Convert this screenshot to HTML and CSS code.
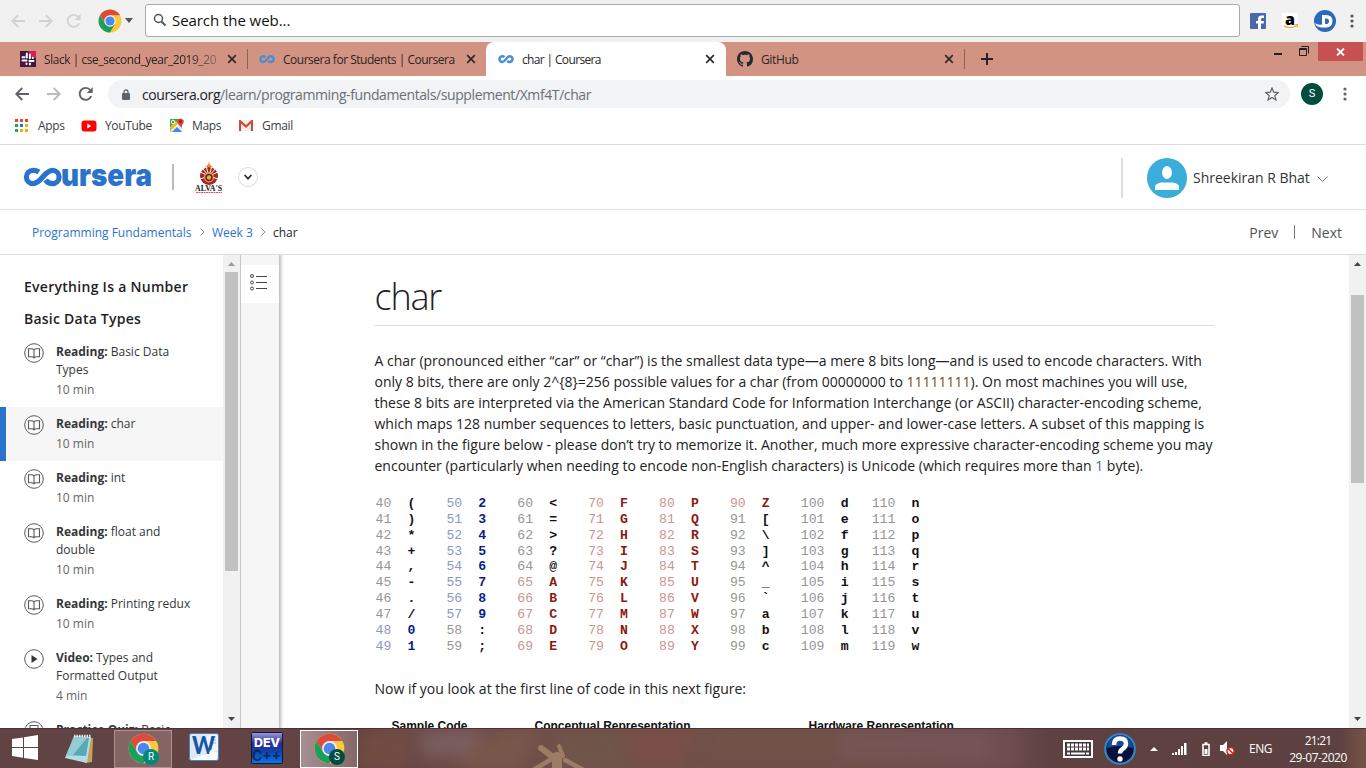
FILE: index.html
```
<!DOCTYPE html>
<html lang="en">
<head>
<meta charset="utf-8">
<title>char | Coursera</title>
<link rel="stylesheet" href="styles.css">
</head>
<body>
<svg width="0" height="0" class="defs">
  <defs>
    <symbol id="chrome" viewBox="0 0 48 48">
      <circle cx="24" cy="24" r="23" fill="#fbc93c"/>
      <path d="M24 12.500h19.900A23 23 0 0 0 4.100 12.500L14 29.500z" fill="#dc4b3e"/>
      <path d="M4.100 12.500A23 23 0 0 0 24 47l10-17.200L24 24 14 29.700z" fill="#1a9f5c"/>
      <circle cx="24" cy="24" r="11.500" fill="#f1f1f1"/>
      <circle cx="24" cy="24" r="9" fill="#4a87ef"/>
    </symbol>
    <symbol id="infinity" viewBox="0 0 16 10">
      <path d="M6.600 3Q5.500 2.200 4.300 2.200a2.900 2.900 0 0 0 0 5.800c3.400 0 4-5.800 7.400-5.800a2.900 2.900 0 0 1 0 5.800Q10.200 8 9.200 7" fill="none" stroke="#4a8fd0" stroke-width="2.500"/>
    </symbol>
    <symbol id="close" viewBox="0 0 10 10"><path d="M1.200 1.200l7.600 7.600M8.800 1.200L1.200 8.800" stroke="#2a2a2e" stroke-width="1.700"/></symbol>
    <symbol id="back" viewBox="0 0 14 14"><path d="M14 7H1.500M7.300 1L1.300 7l6 6" fill="none" stroke="currentColor" stroke-width="1.900"/></symbol>
    <symbol id="reload" viewBox="0 0 16 16"><path d="M13.200 10.200A6 6 0 1 1 12.300 4" fill="none" stroke="currentColor" stroke-width="1.900"/><path d="M14.700 1v6h-6z" fill="currentColor"/></symbol>
    <symbol id="book" viewBox="0 0 20 20"><circle cx="10" cy="10" r="9.300" fill="#fff" fill-opacity=".5" stroke="#55585b"/><path d="M10 7q-1-1.200-2.500-1.200h-3v8h3Q9 13.800 10 14.800q1-1 2.500-1h3v-8h-3Q11 5.800 10 7zv7.500" fill="none" stroke="#55585b" stroke-width="1.100"/></symbol>
    <symbol id="dots" viewBox="0 0 4 14"><circle cx="2" cy="2" r="1.600"/><circle cx="2" cy="7" r="1.600"/><circle cx="2" cy="12" r="1.600"/></symbol>
  </defs>
</svg>

<div class="search-strip">
  <svg class="nav faded" width="14" height="14"><use href="#back"/></svg>
  <svg class="nav faded flip" width="14" height="14"><use href="#back"/></svg>
  <svg class="nav faded" width="16" height="16"><use href="#reload"/></svg>
  <svg class="launcher" width="24" height="24"><use href="#chrome"/></svg>
  <svg class="caret" width="8" height="5"><path d="M0 0h8L4 5z" fill="#555"/></svg>
  <div class="web-search">
    <svg width="14" height="14"><circle cx="5.500" cy="5.500" r="4" fill="none" stroke="#555" stroke-width="1.500"/><path d="M8.500 8.500l4 4" stroke="#555" stroke-width="1.900"/></svg>
    <span>Search the web...</span>
  </div>
  <svg class="fb" width="16" height="16"><rect width="16" height="16" rx="1" fill="#4a69a8"/><path d="M8 16v-5.500H6V8h2V6q0-3.500 3.500-3.500H14V5h-1.700q-1.300 0-1.300 1.300V8h3l-.4 2.500H11V16z" fill="#fff"/></svg>
  <svg class="amazon" width="16" height="16"><rect width="16" height="16" fill="#fff"/><text x="3" y="12" class="amazon-a">a</text><path d="M1.500 12.700q6 3.500 12.500.5M12.500 12l3-.500-.7 3" fill="none" stroke="#f4a11a" stroke-width="1.200"/></svg>
  <svg class="disk" width="22" height="22"><circle cx="11" cy="11" r="11" fill="#2d68bd"/><path d="M.5 13q3.500 2.500 7.500 1.500V5h4q6.500 0 6.500 6T12 17.500H7.500Q2.500 17 .5 13zM11 8.500v5.500h1q3 0 3-2.800t-3-2.700z" fill="#fff" fill-rule="evenodd"/></svg>
  <svg class="menu" width="4" height="14" fill="#555"><use href="#dots"/></svg>
</div>

<div class="tabs">
  <div class="tab slack">
    <svg width="16" height="16"><rect width="16" height="16" fill="#3f1645"/><path d="M8 0h8v7H12z" fill="#d4214e"/><g stroke="#fff" stroke-width="2" stroke-linecap="round"><path d="M6.800 2.500v4M2.500 6.200h2M9.900 3.500v3.800M12.800 6.800v.1M2.500 9.500h4M9.500 9.900h4M6.500 12.500v.5M9.900 12.500v1"/></g></svg>
    <span class="title fade">Slack | cse_second_year_2019_20</span>
    <svg class="x" width="10" height="10"><use href="#close"/></svg>
  </div>
  <i class="tab-sep"></i>
  <div class="tab students">
    <svg width="16" height="10"><use href="#infinity"/></svg>
    <span class="title">Coursera for Students | Coursera</span>
    <svg class="x" width="10" height="10"><use href="#close"/></svg>
  </div>
  <div class="tab active">
    <svg width="16" height="10"><use href="#infinity"/></svg>
    <span class="title">char | Coursera</span>
    <svg class="x" width="10" height="10"><use href="#close"/></svg>
  </div>
  <div class="tab github">
    <svg width="16" height="16" viewBox="0 0 16 16"><path fill="#24292e" d="M8 0C3.580 0 0 3.580 0 8c0 3.540 2.290 6.530 5.470 7.590.4.070.55-.17.55-.38 0-.19-.01-.82-.01-1.490-2.010.37-2.530-.49-2.690-.94-.09-.23-.48-.94-.82-1.130-.28-.15-.68-.52-.01-.53.63-.01 1.080.58 1.230.82.720 1.210 1.870.87 2.330.66.070-.52.28-.87.510-1.070-1.780-.2-3.640-.89-3.640-3.950 0-.87.310-1.590.82-2.150-.08-.2-.36-1.020.08-2.120 0 0 .67-.21 2.200.82.640-.18 1.320-.27 2-.27s1.360.09 2 .27c1.530-1.040 2.200-.82 2.200-.82.440 1.100.160 1.920.080 2.120.510.560.820 1.270.820 2.150 0 3.070-1.870 3.750-3.650 3.950.290.250.540.730.540 1.480 0 1.070-.01 1.930-.01 2.200 0 .210.150.460.550.380A8.010 8.010 0 0 0 16 8c0-4.420-3.580-8-8-8z"/></svg>
    <span class="title">GitHub</span>
    <svg class="x" width="10" height="10"><use href="#close"/></svg>
  </div>
  <i class="tab-sep"></i>
  <svg class="plus" width="12" height="12"><path d="M6 0v12M0 6h12" stroke="#24242a" stroke-width="2"/></svg>
  <div class="win-buttons">
    <svg width="8" height="2"><rect width="8" height="2" fill="#222"/></svg>
    <svg width="10" height="10"><path d="M.5 2.500h7v7h-7zM2.500.5h7v7M0 3.500h8" fill="none" stroke="#222"/></svg>
    <div class="win-close"><svg width="9" height="8"><path d="M1 .5l7 7M8 .5l-7 7" stroke="#fff" stroke-width="1.800"/></svg></div>
  </div>
</div>

<div class="toolbar">
  <svg class="nav" width="14" height="14"><use href="#back"/></svg>
  <svg class="nav flip light" width="14" height="14"><use href="#back"/></svg>
  <svg class="nav" width="16" height="16"><use href="#reload"/></svg>
  <div class="omnibox">
    <svg class="lock" width="8" height="11"><path d="M2 4.500V3a2 2 0 0 1 4 0v1.500" fill="none" stroke="#5f6368" stroke-width="1.300"/><rect y="4" width="8" height="7" rx="1" fill="#5f6368"/></svg>
    <span class="url"><b>coursera.org</b>/learn/programming-fundamentals/supplement/Xmf4T/char</span>
    <svg class="star" width="14" height="14" viewBox="0 0 14 14"><path d="M7 1l1.700 4.200 4.500.4-3.400 2.900 1.100 4.400L7 10.500l-3.900 2.400 1.100-4.400L.8 5.600l4.500-.4z" fill="none" stroke="#5f6368" stroke-width="1.200"/></svg>
  </div>
  <div class="profile">S</div>
  <svg width="4" height="14" fill="#5f6368"><use href="#dots"/></svg>
</div>

<div class="bookmarks">
  <svg class="apps" width="13" height="13"><path d="M0 0h3v3H0zM5 0h3v3H5zM10 0h3v3h-3z" fill="#e8432e"/><path d="M0 5h3v3H0zM0 10h3v3H0z" fill="#2da44e"/><path d="M5 5h3v3H5z" fill="#1a73e8"/><path d="M10 5h3v3h-3zM5 10h3v3H5zM10 10h3v3h-3z" fill="#f4af00"/></svg>
  <span class="bm-apps">Apps</span>
  <svg class="bm-icon" width="16" height="12"><rect x=".5" y=".5" width="15" height="11" rx="3" fill="#f00"/><path d="M6.300 3.500v5l4-2.500z" fill="#fff"/></svg>
  <span class="bm-yt">YouTube</span>
  <svg class="bm-icon" width="15" height="15"><path d="M1 1h12v13H1z" fill="#34a853"/><path d="M1 13L10 4l4 9-1 1H2z" fill="#e8eaed"/><path d="M3 14l5-5 5 5z" fill="#4285f4"/><path d="M1 9l6-6 2 2-8 8z" fill="#fbbc04"/><circle cx="4" cy="4" r="1.800" fill="none" stroke="#fff"/><path d="M11.500 9Q7.500 4.500 8.500 2.200q3-3.500 6 0Q15.500 4.500 11.500 9z" fill="#e53935"/><circle cx="11.500" cy="3.500" r="1.200" fill="#7c1d1d"/></svg>
  <span class="bm-maps">Maps</span>
  <svg class="bm-icon" width="14" height="11"><path d="M0 0h14v11H0z" fill="#eee"/><path d="M1 11V1l6 5.500L13 1v10" fill="none" stroke="#d54538" stroke-width="2.200"/></svg>
  <span class="bm-gmail">Gmail</span>
</div>

<header class="site-header">
  <svg class="logo" width="128" height="20"><path d="M15 5Q12.500 3.400 9 3.400a6.600 6.600 0 0 0 0 13.200C17.500 16.600 20 3.400 28.500 3.400a6.600 6.600 0 0 1 0 13.200Q24 16.600 21.500 13" fill="none" stroke="#2a73cc" stroke-width="5.200"/><text x="37" y="19" textLength="91" lengthAdjust="spacingAndGlyphs" class="logo-text">ursera</text></svg>
  <i class="logo-sep"></i>
  <svg class="alvas" width="28" height="34"><circle cx="14" cy="16" r="9" fill="#a52525"/><path d="M14 16L5 12M14 16L7 8M14 16L11 6M14 16l3-10M14 16l7-8M14 16l9-4M14 16l-9 3M14 16l9 3" stroke="#fff"/><circle cx="14" cy="17.500" r="5" fill="#eaaa46"/><circle cx="14" cy="17.500" r="3" fill="none" stroke="#60201d" stroke-width="1.500"/><path d="M10 7q4-2 4-6.500Q14 5 18 7z" fill="#ef8d28"/><path d="M5 22q9 7 18 0l-2 3H7z" fill="#fff"/><text x="0" y="30.500" textLength="27" lengthAdjust="spacingAndGlyphs" class="alvas-text">ALVA'S</text><path d="M1 32.500h26" stroke="#ea5252" stroke-dasharray="2 .5"/></svg>
  <svg class="round-caret" width="20" height="20"><circle cx="10" cy="10" r="9.500" fill="#fff" stroke="#ddd"/><path d="M6.500 8l3.500 3.700L13.500 8" fill="none" stroke="#2c3035" stroke-width="1.800"/></svg>
  <i class="user-sep"></i>
  <svg class="avatar" width="40" height="40"><circle cx="20" cy="20" r="20" fill="#3badda"/><ellipse cx="20" cy="14.500" rx="5" ry="6.500" fill="#fff"/><path d="M8 32v-3q0-3.500 6-4.500h12q6 1 6 4.500v3z" fill="#fff"/></svg>
  <span class="user">Shreekiran R Bhat</span>
  <svg class="user-caret" width="11" height="6"><path d="M.5.5l5 5 5-5" fill="none" stroke="#777"/></svg>
</header>

<nav class="crumbs">
  <a class="crumb-course">Programming Fundamentals</a>
  <svg width="5" height="8"><path d="M.5.5L4 4 .5 7.500" fill="none" stroke="#999"/></svg>
  <a class="crumb-week">Week 3</a>
  <svg width="5" height="8"><path d="M.5.5L4 4 .5 7.500" fill="none" stroke="#999"/></svg>
  <span class="crumb-now">char</span>
  <span class="prev">Prev</span><i class="pager-sep"></i><span class="next">Next</span>
</nav>

<div class="content">
  <aside class="lessons">
    <h3 class="wide">Everything Is a Number</h3>
    <h3>Basic Data Types</h3>
    <div class="lesson"><svg width="20" height="20"><use href="#book"/></svg><div><p><b>Reading:</b> Basic Data<br>Types</p><small>10 min</small></div></div>
    <div class="lesson current"><svg width="20" height="20"><use href="#book"/></svg><div><p><b>Reading:</b> char</p><small>10 min</small></div></div>
    <div class="lesson"><svg width="20" height="20"><use href="#book"/></svg><div><p><b>Reading:</b> int</p><small>10 min</small></div></div>
    <div class="lesson"><svg width="20" height="20"><use href="#book"/></svg><div><p><b>Reading:</b> float and<br>double</p><small>10 min</small></div></div>
    <div class="lesson"><svg width="20" height="20"><use href="#book"/></svg><div><p><b>Reading:</b> Printing redux</p><small>10 min</small></div></div>
    <div class="lesson"><svg width="20" height="20"><circle cx="10" cy="10" r="9.300" fill="#fff" stroke="#55585b"/><path d="M7.500 6v8l6-4z" fill="#333639"/></svg><div><p><b>Video:</b> Types and<br>Formatted Output</p><small>4 min</small></div></div>
    <div class="lesson"><svg width="20" height="20"><circle cx="10" cy="10" r="9.300" fill="#fff" stroke="#55585b"/><rect x="6" y="4.500" width="8" height="11" fill="none" stroke="#55585b"/></svg><div><p><b>Practice Quiz:</b> Basic</p></div></div>
  </aside>
  <div class="scroll side-scroll">
    <svg width="7" height="4"><path d="M0 4h7L3.500 0z" fill="#999"/></svg>
    <i class="thumb"></i>
    <svg class="down" width="7" height="4"><path d="M0 0h7L3.500 4z" fill="#444"/></svg>
  </div>
  <div class="rail">
    <div class="rail-button"><svg width="17" height="17"><g fill="none" stroke="#444"><circle cx="2" cy="2" r="1.500"/><circle cx="2" cy="8.500" r="1.500"/><circle cx="2" cy="14.500" r="1.500"/></g><path d="M6 2.500h11M6 8.500h11M6 14.500h11" stroke="#444"/></svg></div>
  </div>
  <main>
    <h1>char</h1>
    <p class="body-text"><span>A char (pronounced either “car” or “char”) is the smallest data type—a mere 8 bits long—and is used to encode characters. With</span><span>only 8 bits, there are only 2^{8}=256 possible values for a char (from 00000000 to <em>11111111</em>). On most machines you will use,</span><span>these 8 bits are interpreted via the American Standard Code for Information Interchange (or ASCII) character-encoding scheme,</span><span>which maps 128 number sequences to letters, basic punctuation, and upper- and lower-case letters. A subset of this mapping is</span><span>shown in the figure below - please don’t try to memorize it. Another, much more expressive character-encoding scheme you may</span><span>encounter (particularly when needing to encode non-English characters) is Unicode (which requires more than <u>1</u> byte).</span></p>
    <div class="ascii" id="ascii"></div>
    <p class="body-text follow">Now if you look at the first line of code in this next figure:</p>
    <div class="figure-heads"><b>Sample Code</b><b>Conceptual Representation</b><b>Hardware Representation</b></div>
  </main>
  <div class="scroll main-scroll">
    <svg width="7" height="4"><path d="M0 4h7L3.500 0z" fill="#444"/></svg>
    <i class="thumb"></i>
    <svg class="down" width="7" height="4"><path d="M0 0h7L3.500 4z" fill="#444"/></svg>
  </div>
</div>

<footer class="taskbar">
  <svg class="wallpaper" width="1366" height="40" preserveAspectRatio="none">
    <defs><filter id="soft"><feGaussianBlur stdDeviation="7"/></filter><filter id="slight"><feGaussianBlur stdDeviation=".7"/></filter></defs>
    <g filter="url(#soft)" opacity=".65">
      <path d="M365 0h50l-10 40h-50z" fill="#795144"/><path d="M420 0h60v28h-60z" fill="#806668"/>
      <path d="M455 40q20-25 55-40h30l-20 40z" fill="#7f5a4b"/><path d="M560 0h60l10 40h-80z" fill="#70594b"/>
      <path d="M620 0h80l-25 40h-35z" fill="#804f48"/><path d="M710 0h130v22H710z" fill="#715549"/>
      <path d="M840 0h150v32H840z" fill="#79595a"/><path d="M990 0h30v40h-30z" fill="#745052"/>
    </g>
    <g filter="url(#slight)" stroke="#a5846c" fill="none" stroke-linecap="round" opacity=".85"><path d="M541 19l12 9" stroke-width="6"/><path d="M559 17l4 10" stroke-width="4"/><path d="M557 28v14" stroke-width="10"/><path d="M550 31l-20 12M565 31l24 13" stroke-width="4.500"/></g>
  </svg>
  <svg class="start" width="26" height="25"><path d="M0 4l11-1.600V12H0zM12 2.200L26 0v12H12zM0 13h11v9.800L0 21zM12 13h14v12l-14-2.100z" fill="#fff"/></svg>
  <svg class="notepad" width="30" height="30"><path d="M11 3l17 1-1 24-7 1z" fill="#c5a25e"/><path d="M9 2l17 1-4 26-22-5z" fill="#b5dce3"/><path d="M9 3l15 1-3 18L1 21z" fill="#57a8b9"/><path d="M9 3l13 1L8 21l-7 1z" fill="#94cbd4"/><path d="M9 2h17" stroke="#e8e8e8" stroke-width="2.500" stroke-dasharray="1.500 1"/></svg>
  <div class="task first"><svg width="31" height="31"><use href="#chrome"/></svg><span class="badge teal">R</span></div>
  <svg class="word" width="30" height="29"><rect x=".5" y=".5" width="29" height="27" rx="2" fill="#dce9f6" stroke="#4c83bd"/><path d="M18 2h11v16H18z" fill="#eef6fc"/><path d="M22 4h5M22 7h5M22 10h5" stroke="#98b9d9"/><text x="3" y="21" textLength="23" lengthAdjust="spacingAndGlyphs" class="word-w">W</text><path d="M2 27q10-5 18-6l1-4 8 3-2 7z" fill="#f9fbff"/></svg>
  <svg class="dev" width="32" height="32"><defs><linearGradient id="dv" x2="0" y2="1"><stop stop-color="#9b9ce0"/><stop offset=".35" stop-color="#2c2d94"/><stop offset=".6" stop-color="#1040a8"/><stop offset="1" stop-color="#0b78e8"/></linearGradient></defs><rect x=".5" y=".5" width="31" height="31" rx="1" fill="url(#dv)" stroke="#111733"/><text x="3" y="14.500" textLength="26" lengthAdjust="spacingAndGlyphs" class="dev-top">DEV</text><text x="1" y="29" textLength="29" lengthAdjust="spacingAndGlyphs" class="dev-bottom">C++</text></svg>
  <div class="task second"><svg width="31" height="31"><use href="#chrome"/></svg><span class="badge green">S</span></div>
  <div class="tray">
    <svg class="keyboard" width="30" height="18"><rect x="1" y="1" width="28" height="16" fill="#46393a" stroke="#fff" stroke-width="2"/><path d="M4 5h22M4 9h22" stroke="#fff" stroke-width="3" stroke-dasharray="3 1"/><path d="M4 13.500h3M8 13.500h14M23 13.500h3" stroke="#fff" stroke-width="2"/></svg>
    <svg class="help" width="32" height="32"><circle cx="16" cy="16" r="14.800" fill="#07113c" stroke="#3289ce" stroke-width="2"/><path d="M3 15A13 13 0 0 1 29 15q-13-4-26 0z" fill="#1b4a96"/><path d="M10 12q0-6.500 6-6.500t6 5q0 3.500-3.500 5.500-2.500 1.500-2.500 4.500" fill="none" stroke="#fff" stroke-width="4.500"/><circle cx="16" cy="26" r="2.700" fill="#fff"/></svg>
    <svg class="up" width="8" height="4"><path d="M0 4h8L4 0z" fill="#fff"/></svg>
    <svg class="signal" width="15" height="12"><path d="M0 10h2v2H0zM3 9h2v3H3zM6 6h2v6H6zM9 3h2v9H9zM12 0h2.500v12H12z" fill="#fff"/></svg>
    <svg class="battery" width="8" height="14"><path d="M1 2.500h6v11H1zM2.500 1h3" fill="none" stroke="#fff" stroke-width="1.600"/><path d="M2.500 7h3v5h-3z" fill="#fff"/></svg>
    <svg class="volume" width="15" height="15"><path d="M0 4h3l4-4v14l-4-4H0z" fill="#fff"/><circle cx="10.500" cy="10" r="3.600" fill="#fff" stroke="#d92020" stroke-width="1.500"/><path d="M8 7.500l5 5" stroke="#d92020" stroke-width="1.500"/></svg>
    <span class="lang">ENG</span>
    <div class="clock"><span class="time">21:21</span><span class="date">29-07-2020</span></div>
  </div>
</footer>
<script src="ascii.js"></script>
</body>
</html>
```
FILE: styles.css
```
* { box-sizing: border-box; }
body { margin: 0; width: 1366px; height: 768px; overflow: hidden; display: flex; flex-direction: column; background: #fff; font-family: "Open Sans", sans-serif; color: #1f1f1f; white-space: nowrap; }
svg { flex: none; display: block; }
i { flex: none; }
p, h1, h3 { margin: 0; }
.defs { position: absolute; }
.nav { color: #5f6368; }
.flip { transform: scaleX(-1); }

.search-strip { height: 41px; margin-bottom: 1px; box-shadow: 0 1px #f1f1f1; flex: none; background: #f1f1f1; display: flex; align-items: center; padding-left: 11px; }
.search-strip .nav + .nav { margin-left: 14px; }
.search-strip .nav + .nav + .nav { margin-left: 13px; }
.nav.faded { color: #d2d2d2; }
.launcher { margin-left: 16px; }
.caret { margin-left: 3px; }
.web-search { width: 1095px; height: 33px; margin-left: 12px; border: 1px solid #a9a9a9; border-radius: 3px; background: #fff; display: flex; align-items: center; gap: 5px; padding: 0 0 2px 7px; font-size: 15px; letter-spacing: -.06px; color: #111; }
.fb { margin-left: 10px; }
.amazon { margin-left: 16px; }
.amazon-a { font: 800 16px "Open Sans", sans-serif; }
.disk { margin-left: 16px; }
.menu { margin-left: 14px; }

.tabs { height: 34px; flex: none; background: #d39383; display: flex; align-items: center; font-size: 12px; color: #2a2425; }
.tab { display: flex; align-items: center; height: 34px; }
.title { margin-left: 8px; }
.x { margin-left: auto; flex: none; }
.slack { width: 247px; padding: 0 10px 0 20px; }
.slack .title { width: 175px; overflow: hidden; letter-spacing: -.45px; }
.fade { -webkit-mask-image: linear-gradient(90deg, #000 82%, rgba(0,0,0,.3)); mask-image: linear-gradient(90deg, #000 82%, rgba(0,0,0,.3)); }
.tab-sep { width: 1px; height: 20px; background: #8b625a; }
.students { width: 238px; padding: 0 10px 0 11px; letter-spacing: -.48px; }
.active { width: 240px; background: #fff; border-radius: 8px 8px 0 0; padding: 0 11px 0 12px; letter-spacing: -.65px; }
.github { width: 238px; padding: 0 10px 0 11px; letter-spacing: -.35px; }
.plus { margin-left: 16px; }
.win-buttons { margin-left: auto; display: flex; height: 34px; align-items: flex-start; padding-right: 3px; }
.win-buttons > svg { margin-top: 11px; }
.win-buttons > svg + svg { margin: 4px 9px 0 17px; }
.win-close { width: 45px; height: 19px; background: #c75050; display: grid; place-items: center; }

.toolbar { height: 36px; flex: none; display: flex; align-items: center; padding-left: 15px; }
.toolbar .nav + .nav { margin-left: 18px; }
.toolbar .nav + .nav + .nav { margin-left: 17px; }
.nav.light { color: #b9bbbe; }
.omnibox { width: 1182px; height: 28px; border-radius: 14px; background: #f1f3f4; margin-left: 14px; padding: 0 11px 0 14px; display: flex; align-items: center; }
.url { margin-left: 12px; font-size: 14px; color: #6b6e72; letter-spacing: -.4px; }
.url b { font-weight: 400; color: #1f2124; }
.star { margin-left: auto; }
.profile { width: 22px; height: 22px; margin: 0 20px 0 11px; border-radius: 50%; background: #004d40; color: #fff; font: 11px/22px Roboto, sans-serif; text-align: center; }

.bookmarks { height: 33px; flex: none; border-bottom: 1px solid #dadce0; display: flex; align-items: center; font-size: 12px; padding: 0 0 5px 15px; color: #3c4043; }
.bm-apps { width: 43px; margin-left: 10px; letter-spacing: -.3px; }
.bm-yt { width: 55px; margin-left: 8px; letter-spacing: -.35px; }
.bm-icon + .bm-maps { margin-left: 8px; }
.bm-yt + .bm-icon { margin-left: 9px; }
.bm-maps { width: 47px; letter-spacing: -.35px; }
.bm-gmail { margin-left: 9px; letter-spacing: -.3px; }

.site-header { height: 65px; flex: none; border-bottom: 1px solid #e1e1e1; display: flex; align-items: center; padding-left: 24px; }
.logo { overflow: visible; }
.logo-text { font: 900 31.500px Inter, sans-serif; fill: #2a73cc; }
.logo-sep { width: 2px; height: 26px; background: #bbb; margin-left: 20px; }
.alvas { margin-left: 21px; margin-top: -1px; }
.alvas-text { font: bold 8px "Liberation Serif", serif; fill: #222; }
.round-caret { margin-left: 15px; }
.user-sep { width: 2px; height: 40px; background: #ddd; margin-left: 863px; margin-top: 2px; }
.avatar { margin: 2px 0 0 24px; }
.user { width: 118px; margin: 0 0 0 6px; font-size: 14px; color: #333; letter-spacing: -.01px; }
.user-caret { margin: 3px 0 0 6px; }

.crumbs { height: 45px; flex: none; border-bottom: 1px solid #ddd; display: flex; align-items: center; padding-left: 32px; font-size: 12px; color: #1f1f1f; }
.crumbs a { color: #2a73cc; }
.crumb-course { width: 160px; margin-right: 8px; }
.crumb-week { margin: 0 8px 0 7px; width: 41px; }
.crumb-now { margin-left: 7px; }
.prev { margin-left: auto; font-size: 14px; color: #525252; }
.pager-sep { width: 1px; height: 14px; background: #777; margin: 0 16.500px 0 15.500px; }
.next { font-size: 14px; color: #525252; margin-right: 24px; }

.content { height: 473px; flex: none; display: flex; overflow: hidden; }
.lessons { width: 223px; flex: none; overflow: hidden; padding-top: 16px; }
.lessons h3 { font-size: 14px; line-height: 32px; font-weight: 600; padding-left: 24px; letter-spacing: .23px; }
.lessons .wide { letter-spacing: .28px; }
.lesson { display: flex; padding: 8px 0 8px 24px; gap: 12px; font-size: 12px; line-height: 18px; color: #333639; }
.lesson b { font-weight: 700; }
.lesson small { display: block; font-size: 12px; margin-top: 2px; color: #666; }
.lesson.current { background: #f6f6f6; border-left: 6px solid #2a73cc; padding-left: 18px; }
.scroll { width: 17px; flex: none; background: #f1f1f1; display: flex; flex-direction: column; align-items: center; padding-top: 7px; }
.scroll .thumb { width: 13px; background: #c1c1c1; }
.scroll .down { margin: auto 0 7px; }
.side-scroll .thumb { height: 299px; margin-top: 6px; }
.main-scroll .thumb { height: 188px; margin-top: 29px; }
.main-scroll { margin-left: auto; }
.rail { width: 39px; flex: none; background: #f6f6f6; border-left: 1px solid #c7c7c7; padding-top: 10px; box-shadow: 1px 0 3px 1px #b8b8b8; }
.side-scroll { position: relative; }
.rail-button { height: 38px; background: #fff; padding: 9px 0 0 9px; }
main { padding-left: 95.500px; width: 936px; overflow: hidden; flex: none; }
h1 { height: 71px; border-bottom: 1px solid #ddd; font-size: 36px; font-weight: 300; line-height: 49px; padding-top: 17px; color: #222; letter-spacing: -1.200px; }
.body-text { font-size: 14px; line-height: 21px; padding-top: 24px; color: #222; }
.body-text span { display: block; }
.body-text em { font-style: normal; color: #7b4b12; }
.body-text u { text-decoration: none; color: #49688d; }
.ascii { margin-top: 20px; padding-left: 1px; display: grid; grid-template-columns: repeat(8, 70.900px); grid-auto-flow: column; grid-template-rows: repeat(10, 15.850px); font: 13.130px/15.850px "Liberation Mono", monospace; color: #969696; white-space: pre; }
.ascii b { color: #111; margin-left: .4px; }
.ascii .digit { color: #8f96c9; }
.ascii .digit b { color: #0c1b8b; }
.ascii .upper { color: #cb9494; }
.ascii .upper b { color: #8b190e; }
.follow { padding-top: 24px; }
.figure-heads { display: flex; font: 12px/14px "Liberation Sans", sans-serif; color: #111; padding: 20px 0 0 17px; }
.figure-heads b:nth-child(1) { width: 143px; }
.figure-heads b:nth-child(2) { width: 274px; }

.taskbar { height: 40px; flex: none; position: relative; display: flex; align-items: center; background: linear-gradient(90deg, #624344 0, #634343 27%, #704f49 36%, #705049 60%, #6c4c4d 73%, #5f4141 77%, #5d4040 98%, #765447); border-top: 1px solid #493233; padding-left: 12px; overflow: hidden; color: #fff; }
.taskbar > * { position: relative; }
.taskbar .wallpaper { position: absolute; left: 0; top: 0; }
.start { margin-top: -2px; }
.notepad { margin-left: 27px; }
.task { width: 58px; height: 38px; flex: none; border: 1px solid #aa9492; background: #856464; display: flex; align-items: center; padding-left: 13px; }
.task.first { margin-left: 19px; }
.badge { position: absolute; width: 16px; height: 16px; border-radius: 50%; left: 28px; top: 18px; font: 10px/16px Roboto, sans-serif; text-align: center; }
.teal { background: #00897b; }
.green { background: #004d40; }
.word { margin-left: 17px; margin-top: -2px; }
.word-w { font: 900 24px Lato, sans-serif; fill: #1556a5; }
.dev { margin-left: 32px; margin-top: -2px; }
.dev-top { font: 800 12px Inter, sans-serif; fill: #fff; }
.dev-bottom { font: 600 14px Inter, sans-serif; fill: #09245b; }
.task.second { margin-left: 17px; border: 1px solid #fff; background: linear-gradient(90deg, #a88f91, #866768); }
.tray { margin-left: auto; display: flex; align-items: center; width: 303px; }
.help { margin-left: 11px; }
.up { margin-left: 14px; }
.signal { margin-left: 14px; }
.battery { margin-left: 15px; }
.volume { margin-left: 10px; }
.lang { margin-left: 14px; width: 23px; font-size: 12px; letter-spacing: -.5px; }
.clock { margin-left: 16px; width: 60px; display: flex; flex-direction: column; align-items: center; font-size: 12px; line-height: 17px; }
.time { letter-spacing: -.8px; }
.date { letter-spacing: -.5px; }
```
FILE: ascii.js
```
const table = document.getElementById("ascii");
for (let code = 40; code < 120; code++) {
  const cell = document.createElement("span");
  const glyph = document.createElement("b");
  if (code >= 48 && code <= 57) cell.className = "digit";
  if (code >= 65 && code <= 90) cell.className = "upper";
  glyph.textContent = String.fromCharCode(code);
  cell.append(code + "  ", glyph);
  table.append(cell);
}
```
